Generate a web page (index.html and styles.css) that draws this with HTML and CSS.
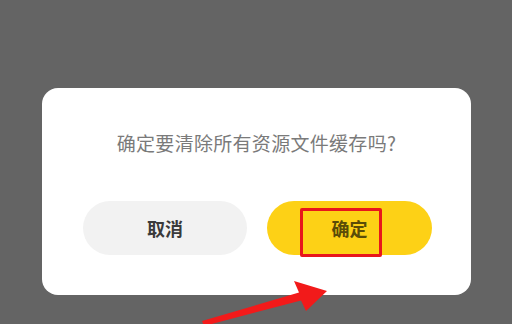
FILE: index.html
```html
<!DOCTYPE html>
<html lang="zh">
<head>
<meta charset="utf-8">
<link rel="stylesheet" href="styles.css">
</head>
<body>
<div class="screen">
  <div class="dialog">
    <p class="message">确定要清除所有资源文件缓存吗?</p>
    <div class="actions">
      <button class="btn cancel">取消</button>
      <button class="btn confirm">确定<span class="highlight"></span></button>
    </div>
  </div>
  <svg class="arrow" width="512" height="324" viewBox="0 0 512 324">
    <polygon points="327,291 294,281 299,292.5 202,321 204,326 301,300.5 306,311" fill="#f21a1a"/>
  </svg>
</div>
</body>
</html>
```
FILE: styles.css
```css
html, body {
  margin: 0;
  padding: 0;
  background: #646464;
}
.screen {
  position: relative;
  width: 512px;
  height: 324px;
  overflow: hidden;
  padding-top: 88px;
  box-sizing: border-box;
  font-family: "Noto Sans CJK SC", "Noto Sans", sans-serif;
}
.dialog {
  margin-left: 42px;
  width: 429px;
  height: 207px;
  background: #ffffff;
  border-radius: 16px;
  box-sizing: border-box;
  padding-top: 45px;
  display: flex;
  flex-direction: column;
  align-items: center;
}
.message {
  margin: 0 0 48px 0;
  font-size: 19px;
  line-height: 20px;
  color: #7a7a7a;
  letter-spacing: 0.3px;
}
.actions {
  display: flex;
  gap: 20px;
  width: 349px;
  margin-left: 2px;
}
.btn {
  border: none;
  height: 54px;
  border-radius: 27px;
  font-family: "Noto Sans CJK SC", "Noto Sans", sans-serif;
  font-size: 18px;
  font-weight: bold;
  padding: 0;
  cursor: pointer;
}
.cancel {
  width: 164px;
  background: #f2f2f2;
  color: #3a3a3a;
}
.confirm {
  position: relative;
  width: 165px;
  background: #fdd116;
  color: #5a4c08;
}
.highlight {
  position: absolute;
  left: 33px;
  top: 7px;
  width: 82px;
  height: 49px;
  box-sizing: border-box;
  border: 3px solid #e8161b;
  border-radius: 2px;
}
.arrow {
  position: absolute;
  left: 0;
  top: 0;
  pointer-events: none;
}
```
